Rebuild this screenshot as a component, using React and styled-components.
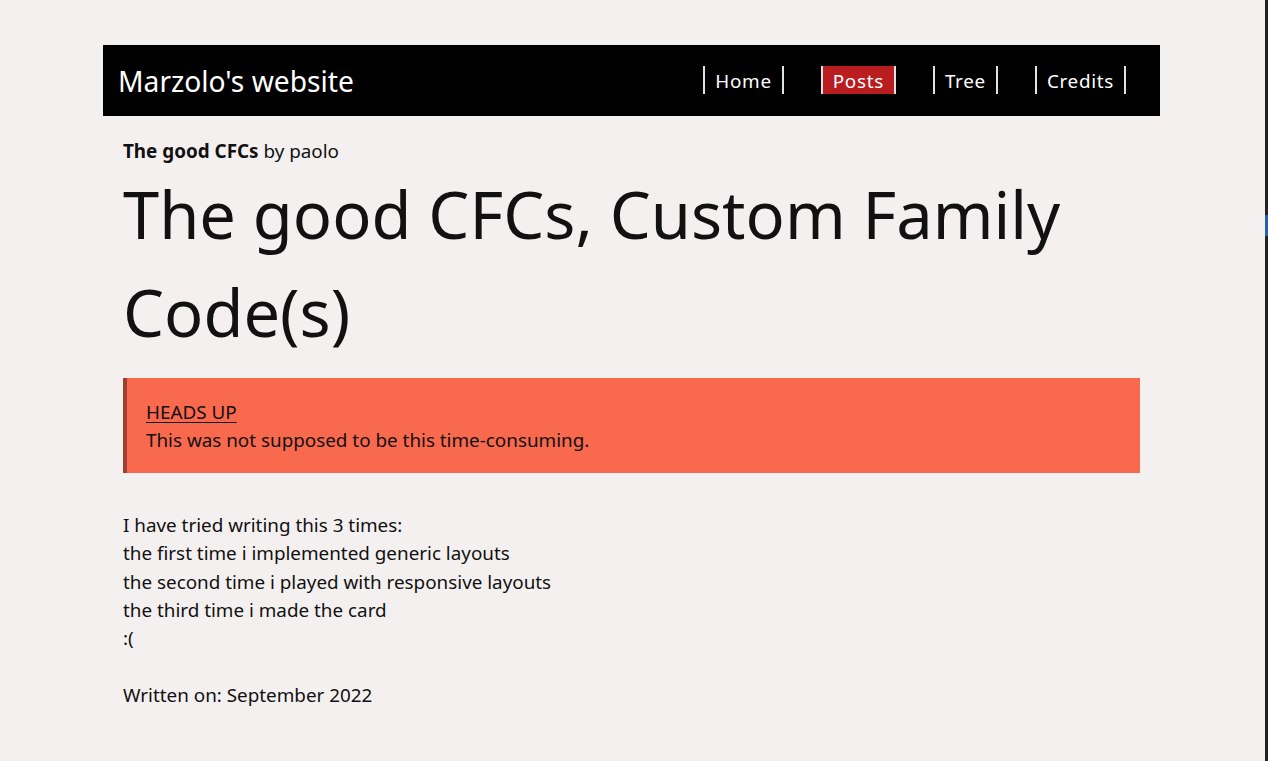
import React from "react";
import styled, { createGlobalStyle } from "styled-components";

const Global = createGlobalStyle`
  html, body { margin: 0; padding: 0; }
  body {
    font-family: "Noto Sans", "Open Sans", sans-serif;
    font-size: 18.85px;
    color: #111;
    background: #f4f0ef;
  }
`;

const Frame = styled.div`
  display: flex;
  min-height: 761px;
`;

const Main = styled.div`
  flex: 1;
  background: #f4f0ef;
`;

const SideStrip = styled.div`
  width: 3px;
  background: #232326;
  display: flex;
  flex-direction: column;
`;

const Thumb = styled.div`
  margin-top: 215px;
  height: 21px;
  background: #2b5fa8;
`;

const Header = styled.header`
  width: 1057px;
  height: 71px;
  margin: 45px 0 0 103px;
  box-sizing: border-box;
  background: #000;
  display: flex;
  align-items: center;
  justify-content: space-between;
  padding: 0 34px 0 15px;
`;

const SiteTitle = styled.div`
  color: #fff;
  font-size: 28.2px;
  line-height: 1;
  padding-top: 2px;
`;

const Nav = styled.nav`
  display: flex;
  gap: 37px;
  padding-bottom: 1px;
`;

const NavLink = styled.a`
  display: block;
  height: 28px;
  line-height: 30px;
  padding: 0 10px;
  border-left: 2px solid #e2e2e2;
  border-right: 2px solid #e2e2e2;
  font-size: 18.85px;
  letter-spacing: 0.7px;
  color: #fff;
  text-decoration: none;
  background: ${(p) => (p.$active ? "#b91d20" : "transparent")};
`;

const Article = styled.article`
  width: 1057px;
  margin: 0 0 0 103px;
  box-sizing: border-box;
  padding: 21px 20px 0;
`;

const Byline = styled.div`
  line-height: 28px;
`;

const Strong = styled.strong`
  font-weight: 700;
`;

const Title = styled.h1`
  margin: 0;
  font-size: 65px;
  font-weight: 400;
  line-height: 98px;
`;

const Callout = styled.div`
  margin-top: 17px;
  background: #f9694e;
  border-left: 4px solid #9a4231;
  padding: 20px 19px 19px;
  line-height: 28px;
`;

const CalloutTitle = styled.div`
  text-decoration: underline;
  text-underline-offset: 3px;
`;

const Body = styled.div`
  margin-top: 38px;
  line-height: 28.3px;
`;

const Line = styled.div`
  min-height: 28.3px;
`;

const lines = [
  "I have tried writing this 3 times:",
  "the first time i implemented generic layouts",
  "the second time i played with responsive layouts",
  "the third time i made the card",
  ":(",
  "",
  "Written on: September 2022",
];

export default function App() {
  return (
    <>
      <Global />
      <Frame>
        <Main>
          <Header>
            <SiteTitle>Marzolo's website</SiteTitle>
            <Nav>
              <NavLink href="#">Home</NavLink>
              <NavLink href="#" $active>Posts</NavLink>
              <NavLink href="#">Tree</NavLink>
              <NavLink href="#">Credits</NavLink>
            </Nav>
          </Header>
          <Article>
            <Byline>
              <Strong>The good CFCs</Strong> by paolo
            </Byline>
            <Title>The good CFCs, Custom Family Code(s)</Title>
            <Callout>
              <CalloutTitle>HEADS UP</CalloutTitle>
              <div>This was not supposed to be this time-consuming.</div>
            </Callout>
            <Body>
              {lines.map((l, i) => (
                <Line key={i}>{l}</Line>
              ))}
            </Body>
          </Article>
        </Main>
        <SideStrip>
          <Thumb />
        </SideStrip>
      </Frame>
    </>
  );
}
